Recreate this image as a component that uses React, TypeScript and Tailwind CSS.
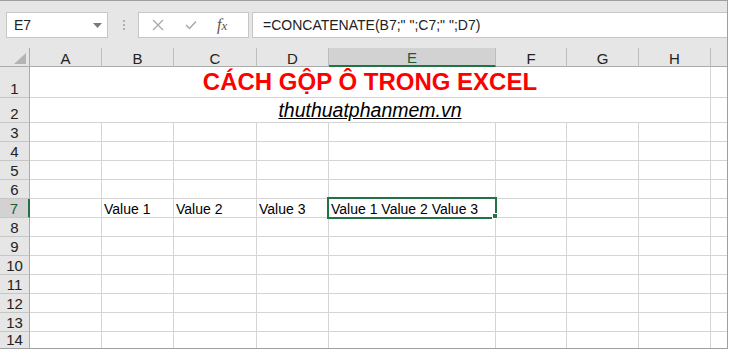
import React from "react";

const cols = [
  { k: "A", w: "w-[72px]" },
  { k: "B", w: "w-[72px]" },
  { k: "C", w: "w-[83px]" },
  { k: "D", w: "w-[72px]" },
  { k: "E", w: "w-[167px]" },
  { k: "F", w: "w-[71px]" },
  { k: "G", w: "w-[72px]" },
  { k: "H", w: "w-[72px]" },
];

const font = { fontFamily: '"Liberation Sans", Arial, sans-serif' };

function RowHeader({ n, h, selected, last }: { n: number; h: string; selected?: boolean; last?: boolean }) {
  return (
    <div
      className={`w-[30px] shrink-0 ${h} flex items-end justify-center leading-none text-[15px] pb-[1px] ${
        last ? "" : "border-b border-[#c6c6c6]"
      } ${
        selected
          ? "bg-[#d2d2d2] text-[#1d5a36] border-r-2 border-r-[#217346]"
          : "bg-[#e6e6e6] text-[#222] border-r border-r-[#ababab]"
      }`}
    >
      {n}
    </div>
  );
}

function GridRow({
  n,
  h,
  children,
  selected,
  last,
}: {
  n: number;
  h: string;
  children?: React.ReactNode;
  selected?: boolean;
  last?: boolean;
}) {
  return (
    <div className={`flex ${h}`}>
      <RowHeader n={n} h={h} selected={selected} last={last} />
      {children}
      <div className={`w-[16px] shrink-0 bg-white ${last ? "" : "border-b border-[#d4d4d4]"}`} />
    </div>
  );
}

function PlainCells({ last, content }: { last?: boolean; content?: Record<string, React.ReactNode> }) {
  return (
    <>
      {cols.map((c) => (
        <div
          key={c.k}
          className={`${c.w} shrink-0 bg-white border-r border-[#d4d4d4] ${last ? "" : "border-b"} relative flex items-end pl-[2px] pb-[1px] text-[14px] leading-none text-black whitespace-nowrap`}
        >
          {content?.[c.k]}
        </div>
      ))}
    </>
  );
}

export default function App() {
  const rows = [3, 4, 5, 6];
  const rowsAfter = [8, 9, 10, 11, 12, 13];
  return (
    <div className="w-[729px] h-[349px] bg-white" style={font}>
      <div className="w-[728px] h-[349px] flex flex-col border-t border-r border-b border-[#9f9f9f] bg-[#e6e6e6] overflow-hidden">
        {/* formula bar area */}
        <div className="h-[47px] shrink-0 pt-[11px] flex items-start">
          <div className="ml-[6px] w-[102px] h-[26px] shrink-0 bg-white border border-[#c6c6c6] flex items-center justify-between pl-[7px] pr-[5px] text-[14px] text-[#222]">
            <span>E7</span>
            <svg width="9" height="5" viewBox="0 0 9 5">
              <polygon points="0,0 9,0 4.5,5" fill="#7a7a7a" />
            </svg>
          </div>
          <div className="w-[30px] h-[26px] shrink-0 flex flex-col items-center justify-center gap-[2px] pl-[1px]">
            <div className="w-[2px] h-[2px] bg-[#b0b0b0]" />
            <div className="w-[2px] h-[2px] bg-[#b0b0b0]" />
            <div className="w-[2px] h-[2px] bg-[#b0b0b0]" />
          </div>
          <div className="w-[111px] h-[26px] shrink-0 bg-white border border-[#c6c6c6] flex items-center">
            <svg width="12" height="12" viewBox="0 0 12 12" className="ml-[13px]">
              <path d="M1 1 L11 11 M11 1 L1 11" stroke="#a8a8a8" strokeWidth="1.3" fill="none" />
            </svg>
            <svg width="12" height="10" viewBox="0 0 12 10" className="ml-[21px]">
              <path d="M1 5 L4.5 8.5 L11 1.5" stroke="#a8a8a8" strokeWidth="1.5" fill="none" />
            </svg>
            <span
              className="ml-[20px] text-[16px] italic text-[#555] leading-none"
              style={{ fontFamily: '"Liberation Serif", "Times New Roman", serif' }}
            >
              f<span className="text-[13px]">x</span>
            </span>
          </div>
          <div className="ml-[3px] flex-1 h-[26px] bg-white border-t border-b border-l border-[#c6c6c6] flex items-center pl-[10px] text-[14px] text-[#222] whitespace-nowrap">
            =CONCATENATE(B7;" ";C7;" ";D7)
          </div>
        </div>

        {/* column headers */}
        <div className="flex h-[19px] shrink-0">
          <div className="w-[30px] shrink-0 border-r border-b border-[#ababab] bg-[#e6e6e6] flex items-end justify-end pr-[3px] pb-[2px]">
            <svg width="12" height="11" viewBox="0 0 12 11">
              <polygon points="12,0 12,11 0,11" fill="#b4b4b4" />
            </svg>
          </div>
          {cols.map((c) =>
            c.k === "E" ? (
              <div
                key={c.k}
                className={`${c.w} shrink-0 bg-[#d2d2d2] border-r border-r-[#bdbdbd] border-b-2 border-b-[#217346] flex items-center justify-center text-[15px] text-[#1d5a36] leading-none pt-[1px]`}
              >
                {c.k}
              </div>
            ) : (
              <div
                key={c.k}
                className={`${c.w} shrink-0 bg-[#e6e6e6] border-r border-r-[#bdbdbd] border-b border-b-[#ababab] flex items-center justify-center text-[15px] text-[#222] leading-none pt-[2px]`}
              >
                {c.k}
              </div>
            )
          )}
          <div className="w-[16px] shrink-0 bg-[#e6e6e6] border-b border-[#ababab]" />
        </div>

        {/* row 1 */}
        <GridRow n={1} h="h-[31px]">
          <div className="w-[681px] shrink-0 bg-white border-r border-b border-[#d4d4d4] flex items-end justify-center pb-[3px]">
            <span className="text-[24px] font-bold text-[#ff0000] leading-none">CÁCH GỘP Ô TRONG EXCEL</span>
          </div>
        </GridRow>
        {/* row 2 */}
        <GridRow n={2} h="h-[25px]">
          <div className="w-[681px] shrink-0 bg-white border-r border-b border-[#d4d4d4] flex items-end justify-center pb-[2px]">
            <span className="text-[19.5px] italic underline text-black leading-none">thuthuatphanmem.vn</span>
          </div>
        </GridRow>
        {rows.map((n) => (
          <GridRow key={n} n={n} h="h-[19px]">
            <PlainCells />
          </GridRow>
        ))}
        {/* row 7 */}
        <GridRow n={7} h="h-[19px]" selected>
          <PlainCells
            content={{
              B: "Value 1",
              C: "Value 2",
              D: "Value 3",
              E: (
                <>
                  <span>Value 1 Value 2 Value 3</span>
                  <div className="absolute z-10 left-[-2px] top-[-2px] w-[170px] h-[22px] border-2 border-[#217346]" />
                  <div className="absolute z-20 left-[163px] top-[14px] w-[6px] h-[6px] bg-[#217346] border border-white" />
                </>
              ),
            }}
          />
        </GridRow>
        {rowsAfter.map((n) => (
          <GridRow key={n} n={n} h="h-[19px]">
            <PlainCells />
          </GridRow>
        ))}
        <GridRow n={14} h="h-[16px]" last>
          <PlainCells last />
        </GridRow>
      </div>
    </div>
  );
}
